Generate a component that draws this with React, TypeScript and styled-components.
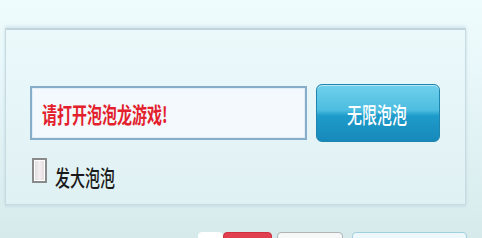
import React from "react";
import styled, { createGlobalStyle } from "styled-components";

const Global = createGlobalStyle`
  html, body { margin: 0; padding: 0; }
  body { font-family: "Noto Sans CJK SC", "Noto Sans", sans-serif; overflow: hidden; }
`;

const Page = styled.div`
  width: 482px;
  height: 238px;
  box-sizing: border-box;
  padding: 28px 0 0 5px;
  background: linear-gradient(180deg, #effcfe 0%, #e6f6f8 40%, #d6eaec 100%);
  overflow: hidden;
  position: relative;
`;

const Panel = styled.div`
  width: 461px;
  height: 177px;
  box-sizing: border-box;
  border: 1px solid #c9dbe2;
  border-top: 2px solid #c4d4dc;
  box-shadow: 0 -2px 3px rgba(170, 195, 210, 0.35), 0 2px 2px rgba(190, 210, 220, 0.4);
  background: linear-gradient(180deg, #ebf9fb 0%, #e0f1f3 100%);
  padding: 54px 0 0 24px;
  display: flex;
  flex-direction: column;
  gap: 16px;
`;

const Row = styled.div`
  display: flex;
  align-items: center;
  gap: 9px;
`;

const Input = styled.div`
  width: 277px;
  height: 54px;
  box-sizing: border-box;
  border: 2px solid #86aec8;
  background: #f3f9fd;
  box-shadow: inset 0 0 0 1px #e2eef6;
  display: flex;
  align-items: center;
  padding-left: 10px;
`;

const Stretch = styled.span<{ $color: string; $weight?: number }>`
  display: inline-block;
  font-size: 15px;
  line-height: 1;
  font-weight: ${(p) => p.$weight ?? 400};
  color: ${(p) => p.$color};
  transform: scale(1, 1.45);
  transform-origin: left center;
`;

const Button = styled.div`
  width: 124px;
  height: 58px;
  box-sizing: border-box;
  border-radius: 6px;
  border: 1px solid #1f85ad;
  background: linear-gradient(180deg, #6fd0ec 0%, #4dbde0 45%, #1e9bca 55%, #1689bb 100%);
  box-shadow: inset 0 1px 0 rgba(255, 255, 255, 0.5);
  display: flex;
  align-items: center;
  justify-content: center;
  padding-right: 2px;
`;

const CheckRow = styled.div`
  display: flex;
  align-items: flex-start;
  gap: 8px;
  padding-left: 2px;
`;

const Box = styled.div`
  width: 15px;
  height: 25px;
  box-sizing: border-box;
  border: 2px solid #8a8a8a;
  background: linear-gradient(90deg, #dcdcdc, #f4eef0 50%, #e2dadd);
  box-shadow: inset 0 0 0 1px #fff;
`;

const Label = styled.div`
  margin-top: 6px;
`;

const BottomBar = styled.div`
  position: absolute;
  left: 198px;
  top: 232px;
  display: flex;
`;

const Tab = styled.div<{ $w: number; $bg: string; $border: string; $ml: number }>`
  width: ${(p) => p.$w}px;
  height: 12px;
  margin-left: ${(p) => p.$ml}px;
  box-sizing: border-box;
  background: ${(p) => p.$bg};
  border: 1px solid ${(p) => p.$border};
  border-radius: 4px 4px 0 0;
`;

export default function App() {
  return (
    <>
      <Global />
      <Page>
        <Panel>
          <Row>
            <Input>
              <Stretch $color="#e3202c" $weight={600}>请打开泡泡龙游戏!</Stretch>
            </Input>
            <Button>
              <Stretch $color="#ffffff" $weight={500} style={{ transformOrigin: "center" }}>无限泡泡</Stretch>
            </Button>
          </Row>
          <CheckRow>
            <Box />
            <Label>
              <Stretch $color="#1a1a1a" $weight={500}>发大泡泡</Stretch>
            </Label>
          </CheckRow>
        </Panel>
        <BottomBar>
          <Tab $w={25} $bg="#ffffff" $border="#ffffff" $ml={0} />
          <Tab $w={49} $bg="#e04050" $border="#d03040" $ml={0} />
          <Tab $w={66} $bg="#f6f8f8" $border="#b0b4b6" $ml={5} />
          <Tab $w={115} $bg="#eef8fb" $border="#9fcfe2" $ml={9} />
        </BottomBar>
      </Page>
    </>
  );
}
